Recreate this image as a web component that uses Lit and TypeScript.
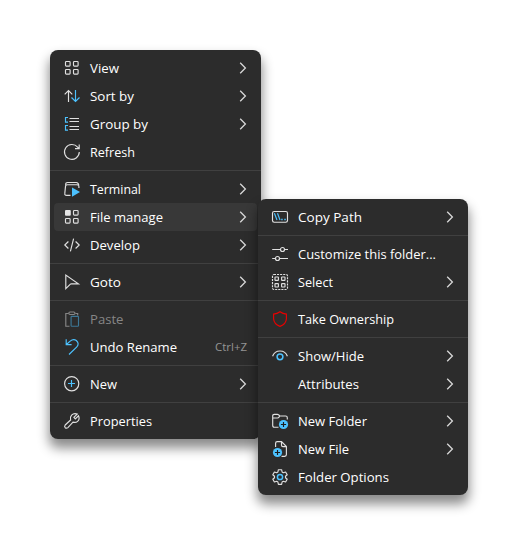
import { LitElement, html, css, svg, nothing } from "lit";
import { customElement, property } from "lit/decorators.js";
import { classMap } from "lit/directives/class-map.js";

interface Item {
  label: string;
  icon?: string;
  sub?: boolean;
  active?: boolean;
  disabled?: boolean;
  hint?: string;
  width: number;
}

const icons: Record<string, unknown> = {
  view: svg`<rect x="1.5" y="1.5" width="4.6" height="4.6" rx=".8"/><rect x="9.5" y="1.5" width="4.6" height="4.6" rx=".8"/><rect x="1.5" y="9.5" width="4.6" height="4.6" rx=".8"/><rect x="9.5" y="9.5" width="4.6" height="4.6" rx=".8"/>`,
  sort: svg`<path d="M4.5 14V2.5M.7 6.3 4.5 2.5 8.3 6.3"/><path class="b" d="M11.5 2v11.5M7.5 9.5l4 4 4-4"/>`,
  group: svg`<path class="b" d="M4 1.5H1.5v4.6H4M4 9.5H1.5v4.6H4"/><path d="M5.5 2.5H15M5.5 5.5H15M5.5 10.5H15M5.5 13.5H15"/>`,
  refresh: svg`<path d="M15.3 8.1A7.4 7.4 0 1 1 13.6 3.2L15 4.5M15.2.4V4.6H11"/>`,
  terminal: svg`<path d="M6.5 14.4H2.6Q.5 14.4.8 12.4L1.5 5.4Q1.7 3.7 3.4 3.7H13Q15 3.7 14.9 6V7M1.7 4.8V3.4Q1.7 1.5 3.6 1.5H12.2Q14.6 1.5 14.8 4.6"/><path class="bf" d="M8 6.4 16 11 8 15.8z"/>`,
  manage: svg`<rect class="wf" x="1" y="1" width="5.8" height="5.8" rx="1"/><rect x="9.5" y="1.5" width="4.6" height="4.6" rx=".8"/><rect x="1.5" y="9.5" width="4.6" height="4.6" rx=".8"/><rect x="9.5" y="9.5" width="4.6" height="4.6" rx=".8"/>`,
  develop: svg`<path d="M4.4 4.5.8 8 4.4 11.5M11.6 4.5 15.2 8 11.6 11.5M9.6 1.7 6.4 14.3"/>`,
  goto: svg`<path d="M1.8 1.1V14.7L6.4 10.2Q6.8 9.8 7.4 9.8H14.4z"/>`,
  paste: svg`<path d="M5.5 15.2H1.8V2.5H4.6M11.4 2.5H13.7V4.5"/><rect x="4.8" y="1" width="6.2" height="2.5" rx="1.2"/><rect class="b" x="7.1" y="5.3" width="7.4" height="9.9" rx=".8"/>`,
  undo: svg`<path class="b" d="M2.2.2V5.6H7.6M2.3 5.5 6.2 2.1Q9.3-.4 12.3 1.5 15.8 4.6 12.6 8.2L5 15.5"/>`,
  new: svg`<circle cx="7.7" cy="7.7" r="7.1"/><path class="b" d="M7.5 4v7M4 7.5h7"/>`,
  wrench: svg`<path d="M13.2 1.1 9.9 4.4 11.3 6 14.5 2.8Q16.1 6.2 13.6 8.4 11.7 10 9 9.1L3.9 14.6Q2.5 15.7 1.2 14.7 0 13.4 1.2 12L6.6 7Q5.8 4.2 7.6 2.2 9.9-.1 13.2 1.1z"/>`,
  path: svg`<rect x=".5" y="2.5" width="15" height="10.7" rx="1.7"/><path class="b" d="M2.4 4.3 5 11M5.5 4.3 8 11"/><path class="bf" d="M9.2 9.8h1.5v1.5H9.2zM12.3 9.8h1.5v1.5h-1.5z"/>`,
  customize: svg`<path d="M.2 3.5H8.4M12.6 3.5H16M.2 12.5H3.4M7.6 12.5H16"/><circle cx="10.5" cy="3.5" r="2"/><circle cx="5.5" cy="12.5" r="2"/>`,
  select: svg`<rect x=".5" y=".5" width="15" height="15" rx="1.4" stroke-dasharray="2.1 1"/><rect x="3" y="3" width="3.4" height="3.4" rx=".5"/><rect x="9.6" y="3" width="3.4" height="3.4" rx=".5"/><rect x="3" y="9.6" width="3.4" height="3.4" rx=".5"/><rect x="9.6" y="9.6" width="3.4" height="3.4" rx=".5"/>`,
  shield: svg`<path class="r" d="M8 .7Q10.8 2.8 14.4 3.1V7.8Q14.2 13 8 15.4 1.8 13 1.6 7.8V3.1Q5.2 2.8 8 .7z"/>`,
  eye: svg`<path d="M.6 8.3Q2.4 3 8 3T15.4 8.3"/><circle class="b thick" cx="8" cy="8.8" r="2.9"/>`,
  folder: svg`<path d="M6.5 14.2H2.3Q.7 14.2.7 12.6V2.9Q.7 1.3 2.3 1.3H5.3Q6.2 1.3 6.8 2L7.7 3H13.6Q15.3 3 15.3 4.7V6.5M.9 5H5.5Q6.4 5 7 4.2L7.7 3"/><circle class="bf" cx="11.5" cy="11.5" r="4.6"/><path class="k" d="M11.5 8.9v5.2M8.9 11.5h5.2"/>`,
  file: svg`<path d="M3.6 6V2.2Q3.6.6 5.2.6H9.5L14.4 5.5V13.6Q14.4 15.3 12.7 15.3H9.5M9.5.8V4.2Q9.5 5.6 10.9 5.6H14.2"/><circle class="bf" cx="5.5" cy="11.5" r="4.6"/><path class="k" d="M5.5 8.9v5.2M2.9 11.5h5.2"/>`,
  gear: svg`<path d="M6.4.7H9.6L10.1 3 11.3 3.7 13.6 3 15.2 5.8 13.5 7.3V8.7L15.2 10.2 13.6 13 11.3 12.3 10.1 13 9.6 15.3H6.4L5.9 13 4.7 12.3 2.4 13 .8 10.2 2.5 8.7V7.3L.8 5.8 2.4 3 4.7 3.7 5.9 3z" stroke-linejoin="round"/><circle class="b thick" cx="8" cy="8" r="2.6"/>`,
};

const mainMenu: Item[][] = [
  [
    { label: "View", icon: "view", sub: true, width: 29 },
    { label: "Sort by", icon: "sort", sub: true, width: 44 },
    { label: "Group by", icon: "group", sub: true, width: 58 },
    { label: "Refresh", icon: "refresh", width: 45 },
  ],
  [
    { label: "Terminal", icon: "terminal", sub: true, width: 51 },
    { label: "File manage", icon: "manage", sub: true, active: true, width: 73 },
    { label: "Develop", icon: "develop", sub: true, width: 50 },
  ],
  [{ label: "Goto", icon: "goto", sub: true, width: 31 }],
  [
    { label: "Paste", icon: "paste", disabled: true, width: 33.5 },
    { label: "Undo Rename", icon: "undo", hint: "Ctrl+Z", width: 87 },
  ],
  [{ label: "New", icon: "new", sub: true, width: 27 }],
  [{ label: "Properties", icon: "wrench", width: 62 }],
];

const fileMenu: Item[][] = [
  [{ label: "Copy Path", icon: "path", sub: true, width: 64 }],
  [
    { label: "Customize this folder...", icon: "customize", width: 138 },
    { label: "Select", icon: "select", sub: true, width: 35 },
  ],
  [{ label: "Take Ownership", icon: "shield", width: 96 }],
  [
    { label: "Show/Hide", icon: "eye", sub: true, width: 66 },
    { label: "Attributes", sub: true, width: 61 },
  ],
  [
    { label: "New Folder", icon: "folder", sub: true, width: 69 },
    { label: "New File", icon: "file", sub: true, width: 51 },
    { label: "Folder Options", icon: "gear", width: 91 },
  ],
];

@customElement("context-menu")
export class ContextMenu extends LitElement {
  @property({ attribute: false }) groups: Item[][] = [];

  static styles = css`
    :host {
      display: block;
      box-sizing: border-box;
      padding: 4px 0;
      border-radius: 8px;
      background: #2c2c2c;
      color: #fff;
      font: 13.5px/28px "Open Sans", "Noto Sans", sans-serif;
      box-shadow: 0 8px 12px 1px rgba(0, 0, 0, 0.46);
    }
    .group + .group {
      margin-top: 4px;
      padding-top: 4px;
      border-top: 1px solid #404040;
    }
    .item {
      display: flex;
      align-items: center;
      height: 28px;
      margin: 0 4px;
      padding: 0 10px;
      border-radius: 4px;
      white-space: nowrap;
    }
    .active {
      background: #383838;
    }
    .disabled {
      color: #868686;
    }
    .icon {
      flex: none;
      width: 16px;
      height: 16px;
      margin-right: 10px;
      fill: none;
      stroke: #e0e0e0;
      stroke-width: 1.15;
      overflow: visible;
    }
    .disabled .icon {
      opacity: 0.5;
    }
    .label {
      flex: 1;
      height: 28px;
      overflow: visible;
      fill: currentColor;
    }
    .hint {
      flex: none;
      width: 32px;
      height: 28px;
      overflow: visible;
      fill: #959595;
      font-size: 11.5px;
    }
    .chevron {
      flex: none;
      width: 8px;
      height: 12px;
      fill: none;
      stroke: #d8d8d8;
      stroke-width: 1.3;
    }
    .b {
      stroke: #4cc2ff;
    }
    .thick {
      stroke-width: 1.5;
    }
    .r {
      stroke: #e80000;
    }
    .k {
      stroke: #1c1c1c;
    }
    .bf {
      fill: #4cc2ff;
      stroke: none;
    }
    .wf {
      fill: #e4e4e4;
      stroke: none;
    }
  `;

  private renderItem(item: Item) {
    return html`<div
      class=${classMap({ item: true, active: !!item.active, disabled: !!item.disabled })}
      role="menuitem"
    >
      <svg class="icon" viewBox="0 0 16 16">${item.icon ? icons[item.icon] : nothing}</svg>
      <svg class="label" width="10">
        <text x="0" y="19" textLength=${item.width} lengthAdjust="spacingAndGlyphs">${item.label}</text>
      </svg>
      ${item.hint
        ? html`<svg class="hint">
            <text x="0" y="18" textLength="32" lengthAdjust="spacingAndGlyphs">${item.hint}</text>
          </svg>`
        : nothing}
      ${item.sub
        ? html`<svg class="chevron" viewBox="0 0 8 12"><path d="M1.2 .8 6.4 6 1.2 11.2" /></svg>`
        : nothing}
    </div>`;
  }

  render() {
    return this.groups.map(
      (group) => html`<div class="group">${group.map((item) => this.renderItem(item))}</div>`
    );
  }
}

@customElement("app-root")
export class AppRoot extends LitElement {
  static styles = css`
    :host {
      display: block;
      position: relative;
      box-sizing: border-box;
      height: 545px;
      padding: 50px;
      background: #fff;
      overflow: hidden;
    }
    .main {
      width: 211px;
    }
    .flyout {
      position: absolute;
      left: 258px;
      top: 199px;
      width: 210px;
    }
  `;

  render() {
    return html`
      <context-menu class="main" role="menu" .groups=${mainMenu}></context-menu>
      <context-menu class="flyout" role="menu" .groups=${fileMenu}></context-menu>
    `;
  }
}
